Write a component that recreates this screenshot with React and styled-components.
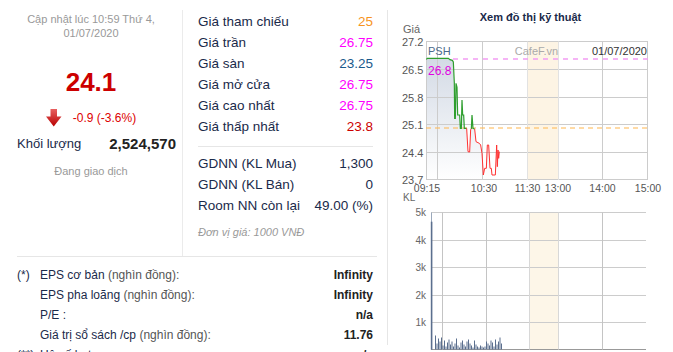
import React from "react";
import styled, { createGlobalStyle } from "styled-components";

const NAVY = "#1a2a4a";

const GlobalStyle = createGlobalStyle`
  body {
    margin: 0;
    background: #fff;
    font-family: "Liberation Sans", Arial, sans-serif;
  }
`;

const Page = styled.div`
  display: flex;
  width: 673px;
  height: 352px;
  overflow: hidden;
`;

const LeftPane = styled.div`
  width: 388px;
  flex-shrink: 0;
  box-sizing: border-box;
  margin-top: 10px;
  height: 335px;
  border-right: 1px solid #e6e6e6;
  display: flex;
  flex-direction: column;
`;

const TopRow = styled.div`
  display: flex;
  height: 246px;
  flex-shrink: 0;
`;

const Summary = styled.div`
  width: 183px;
  height: 247px;
  box-sizing: border-box;
  border-right: 1px solid #ebebeb;
  display: flex;
  flex-direction: column;
  align-items: center;
  padding-top: 2px;
`;

const UpdateText = styled.div`
  font-size: 11px;
  line-height: 14px;
  color: #999;
  text-align: center;
`;

const BigPrice = styled.div`
  color: #cc0000;
  font-weight: bold;
  font-size: 26px;
  line-height: 30px;
  margin-top: 27px;
`;

const ChangeRow = styled.div`
  display: flex;
  align-items: center;
  gap: 11px;
  margin-top: 12px;
  height: 18px;
  color: #dd0000;
  font-size: 12px;
`;

const VolumeRow = styled.div`
  align-self: stretch;
  display: flex;
  justify-content: space-between;
  align-items: center;
  padding: 0 6px 0 17px;
  margin-top: 8px;
  line-height: 18px;
`;

const VolumeLabel = styled.span`
  font-size: 13px;
  color: ${NAVY};
`;

const VolumeValue = styled.span`
  font-size: 15px;
  font-weight: bold;
  color: #222;
`;

const Status = styled.div`
  margin-top: 11px;
  font-size: 11px;
  line-height: 14px;
  color: #999;
`;

const PriceCol = styled.div`
  flex: 1;
  padding: 1px 14px 0 15px;
`;

const PriceRow = styled.div`
  display: flex;
  justify-content: space-between;
  line-height: 21px;
  font-size: 13.5px;
  color: ${NAVY};
`;

const PriceValue = styled.span`
  color: ${(p) => p.$color || NAVY};
`;

const Divider = styled.div`
  margin-top: 9px;
  border-top: 1px solid #e6e6e6;
  padding-top: 6px;
`;

const Note = styled.div`
  margin-top: 9px;
  font-size: 11px;
  line-height: 14px;
  font-style: italic;
  color: #999;
`;

const Bottom = styled.div`
  margin: 0 10px 0 17px;
  border-top: 1px solid #e6e6e6;
  padding: 8px 4px 0 0;
`;

const InfoRow = styled.div`
  display: grid;
  grid-template-columns: 23px 1fr auto;
  line-height: 20px;
  font-size: 12px;
  color: ${NAVY};
`;

const Unit = styled.span`
  color: #555;
`;

const InfoValue = styled.span`
  font-weight: bold;
  color: #222;
`;

const ChartPane = styled.div`
  flex: 1;
  display: flex;
  flex-direction: column;
  padding-top: 10px;
`;

const ChartTitle = styled.div`
  text-align: center;
  font-size: 11px;
  font-weight: bold;
  line-height: 14px;
  color: ${NAVY};
`;

const ChartSvg = styled.svg`
  display: block;
  font-family: "Liberation Sans", Arial, sans-serif;
`;

const DownArrow = () => (
  <svg width="16" height="18" viewBox="0 0 16 18">
    <defs>
      <linearGradient id="arr" x1="0" y1="0" x2="0" y2="1">
        <stop offset="0" stopColor="#e86060" />
        <stop offset="1" stopColor="#b80000" />
      </linearGradient>
    </defs>
    <path d="M4.5 0 H11 V7.5 H15.5 L7.75 17.5 L0 7.5 H4.5 Z" fill="url(#arr)" />
  </svg>
);

const map = (pts) => pts.map(([X, Y]) => `${400 + X / 3},${Y / 3}`).join(" ");

const green1 = [[79,178],[82,175],[145,175],[150,179],[157,181],[160,186],[163,250],[164,355],[166,355],[168,250],[171,262],[173,345],[179,345],[181,385],[184,385],[186,300],[188,345],[191,345],[193,385],[200,385]];
const red1 = [[200,385],[204,455],[209,456],[212,388],[214,387]];
const green2 = [[214,387],[216,345],[219,385],[224,387]];
const red2 = [[224,387],[228,425],[238,430],[242,435],[246,460],[250,525],[254,505],[259,505],[262,435],[266,435],[270,505],[274,505],[276,525],[286,525],[290,435],[292,500],[294,450],[296,475],[298,455]];
const area = [...green1, ...red1, ...green2, ...red2, [298, 540], [79, 540]];

const priceGridY = [41.5, 69.5, 97.5, 124.5, 152.5, 179.5];
const priceLabels = ["27.2", "26.5", "25.8", "25.1", "24.4", "23.7"];
const priceGridX = [437.5, 482.5, 527.5, 558.5, 602.5, 647.5];
const timeLabels = [
  ["09:15", 427],
  ["10:30", 484],
  ["11:30", 527.5],
  ["13:00", 558],
  ["14:00", 602.5],
  ["15:00", 648],
];
const volGridY = [212.5, 240.5, 267.5, 295.5, 322.5, 349.5];
const volLabels = ["5k", "4k", "3k", "2k", "1k"];
const volGridX = [442.5, 486.5, 529.5, 558.5, 602.5];
const bars = [14,6,11,8,12,4,9,3,7,10,5,8,3,6,11,4,2,7,9,5,3,8,10,6,4,2,9,5,3,2,4,3,2,3,8,6,4,9,7,3,10,5,8,12,6];

const Chart = () => (
  <ChartSvg width="285" height="328" viewBox="388 24 285 328">
    <defs>
      <linearGradient id="fillg" gradientUnits="userSpaceOnUse" x1="0" y1="58" x2="0" y2="180">
        <stop offset="0" stopColor="#d3dae5" />
        <stop offset="1" stopColor="#ffffff" />
      </linearGradient>
    </defs>
    {/* price chart */}
    <rect x="527.5" y="41.5" width="31" height="138" fill="#fdf4e4" />
    <polygon points={map(area)} fill="url(#fillg)" />
    {priceGridY.map((y) => (
      <line key={y} x1="426" x2="648" y1={y} y2={y} stroke="#cccccc" strokeWidth="1" />
    ))}
    <line x1="426.5" x2="426.5" y1="41.5" y2="180" stroke="#cccccc" />
    {priceGridX.map((x) => (
      <line key={x} x1={x} x2={x} y1="41.5" y2="180" stroke={x === 527.5 || x === 558.5 ? "#e2e2e2" : "#cccccc"} />
    ))}
    <line x1="453" x2="648" y1="59" y2="59" stroke="#f29cf2" strokeWidth="1.3" strokeDasharray="5 5" />
    <line x1="426" x2="648" y1="128" y2="128" stroke="#ffb54d" strokeWidth="1.2" strokeDasharray="5 4" />
    <polyline points={map(green1)} fill="none" stroke="#2e9e2e" strokeWidth="1.2" />
    <polyline points={map(green2)} fill="none" stroke="#2e9e2e" strokeWidth="1.2" />
    <polyline points={map(red1)} fill="none" stroke="#ff3030" strokeWidth="1" />
    <polyline points={map(red2)} fill="none" stroke="#ff3030" strokeWidth="1" />
    <text x="403" y="33" fontSize="11" fill="#666">Giá</text>
    {priceLabels.map((t, i) => (
      <text key={t} x="402" y={priceGridY[i] + 4} fontSize="11" fill="#555">{t}</text>
    ))}
    {timeLabels.map(([t, x]) => (
      <text key={t} x={x} y="192" fontSize="10.5" fill="#555" textAnchor="middle">{t}</text>
    ))}
    <text x="428" y="55" fontSize="11" fill="#4a6a8c">PSH</text>
    <text x="428" y="74.5" fontSize="12" fill="#e000e0">26.8</text>
    <text x="536.5" y="55" fontSize="11" fill="#aaaaaa" textAnchor="middle">CafeF.vn</text>
    <text x="647" y="55" fontSize="11" fill="#333" textAnchor="end">01/07/2020</text>

    {/* volume chart */}
    <text x="403" y="201" fontSize="10" fill="#666">KL</text>
    <rect x="529.5" y="212.5" width="29" height="137" fill="#fdf6e8" />
    {volGridY.map((y) => (
      <line key={y} x1="431" x2="646" y1={y} y2={y} stroke={y === 349.5 ? "#999" : "#cccccc"} />
    ))}
    {volGridX.map((x) => (
      <line key={x} x1={x} x2={x} y1="212.5" y2="349.5" stroke={x === 529.5 || x === 558.5 ? "#d8d8d8" : "#c4c4c4"} />
    ))}
    <line x1="431.5" x2="431.5" y1="212.5" y2="349.5" stroke="#9aa8bb" />
    <rect x="430.8" y="221.7" width="1.6" height="128" fill="#5b6f8e" />
    {volLabels.map((t, i) => (
      <text key={t} x="426" y={volGridY[i] + 3.5} fontSize="10" fill="#666" textAnchor="end">{t}</text>
    ))}
    {bars.map((h, i) => (
      <rect key={i} x={435 + i * 1.5} y={349.5 - h} width="1" height={h} fill="#5b6f8e" />
    ))}
  </ChartSvg>
);

const prices = [
  ["Giá tham chiếu", "25", "#f7941d"],
  ["Giá trần", "26.75", "#ff00ff"],
  ["Giá sàn", "23.25", "#1a5a8c"],
  ["Giá mở cửa", "26.75", "#ff00ff"],
  ["Giá cao nhất", "26.75", "#ff00ff"],
  ["Giá thấp nhất", "23.8", "#cc0000"],
];

const foreign = [
  ["GDNN (KL Mua)", "1,300"],
  ["GDNN (KL Bán)", "0"],
  ["Room NN còn lại", "49.00 (%)"],
];

const infos = [
  ["(*)", "EPS cơ bản", " (nghìn đồng):", "Infinity"],
  ["", "EPS pha loãng", " (nghìn đồng):", "Infinity"],
  ["", "P/E :", "", "n/a"],
  ["", "Giá trị sổ sách /cp", " (nghìn đồng):", "11.76"],
  ["(**)", "Hệ số beta", "", "n/a"],
];

export default function App() {
  return (
    <>
      <GlobalStyle />
      <Page>
        <LeftPane>
          <TopRow>
            <Summary>
              <UpdateText>
                Cập nhật lúc 10:59 Thứ 4,
                <br />
                01/07/2020
              </UpdateText>
              <BigPrice>24.1</BigPrice>
              <ChangeRow>
                <DownArrow />
                <span>-0.9 (-3.6%)</span>
              </ChangeRow>
              <VolumeRow>
                <VolumeLabel>Khối lượng</VolumeLabel>
                <VolumeValue>2,524,570</VolumeValue>
              </VolumeRow>
              <Status>Đang giao dịch</Status>
            </Summary>
            <PriceCol>
              {prices.map(([l, v, c]) => (
                <PriceRow key={l}>
                  <span>{l}</span>
                  <PriceValue $color={c}>{v}</PriceValue>
                </PriceRow>
              ))}
              <Divider>
                {foreign.map(([l, v]) => (
                  <PriceRow key={l}>
                    <span>{l}</span>
                    <PriceValue>{v}</PriceValue>
                  </PriceRow>
                ))}
              </Divider>
              <Note>Đơn vị giá: 1000 VNĐ</Note>
            </PriceCol>
          </TopRow>
          <Bottom>
            {infos.map(([m, l, u, v]) => (
              <InfoRow key={l}>
                <span>{m}</span>
                <span>
                  {l}
                  <Unit>{u}</Unit>
                </span>
                <InfoValue>{v}</InfoValue>
              </InfoRow>
            ))}
          </Bottom>
        </LeftPane>
        <ChartPane>
          <ChartTitle>Xem đồ thị kỹ thuật</ChartTitle>
          <Chart />
        </ChartPane>
      </Page>
    </>
  );
}
